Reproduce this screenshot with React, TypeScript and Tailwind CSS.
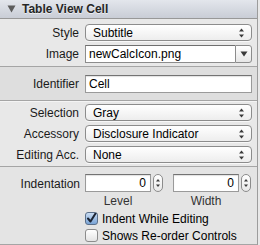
import React from "react";

const font = "font-['Liberation_Sans',Arial,sans-serif]";

function UpDown() {
  return (
    <svg width="7" height="10" viewBox="0 0 7 10" className="shrink-0">
      <path d="M3.5 0.5 L6 3.5 L1 3.5 Z" fill="#3a3a3a" />
      <path d="M3.5 9.5 L6 6.5 L1 6.5 Z" fill="#3a3a3a" />
    </svg>
  );
}

function Row({ label, children }: { label: string; children: React.ReactNode }) {
  return (
    <div className="flex h-[21px] items-center">
      <div className="w-[80px] pr-[1px] text-right text-[12px] text-[#1a1a1a]">{label}</div>
      <div className="ml-[5px] w-[167px]">{children}</div>
    </div>
  );
}

function Popup({ value }: { value: string }) {
  return (
    <div className="flex h-[17px] items-center justify-between rounded-[4px] border border-[#8c8c8c] bg-gradient-to-b from-white to-[#ededed] pl-[7px] pr-[6px] text-[12px] text-black shadow-[0_1px_0_rgba(255,255,255,0.7)]">
      <span>{value}</span>
      <UpDown />
    </div>
  );
}

function Combo({ value }: { value: string }) {
  return (
    <div className="flex h-[18px] items-stretch">
      <div className="flex flex-1 items-center border border-r-0 border-[#8c8c8c] border-t-[#6f6f6f] bg-white pl-[3px] text-[12px] text-black">
        {value}
      </div>
      <div className="flex w-[17px] items-center justify-center rounded-r-[3px] border border-[#8c8c8c] bg-gradient-to-b from-white to-[#e6e6e6]">
        <svg width="8" height="6" viewBox="0 0 8 6">
          <path d="M0.5 0.5 L7.5 0.5 L4 5.5 Z" fill="#3a3a3a" />
        </svg>
      </div>
    </div>
  );
}

function Field({ value, align = "left", className = "" }: { value: string; align?: "left" | "right"; className?: string }) {
  return (
    <div
      className={`flex h-[18px] items-center border border-[#9a9a9a] border-t-[#737373] bg-white text-[12px] text-black shadow-[inset_0_1px_1px_rgba(0,0,0,0.12)] ${
        align === "right" ? "justify-end pr-[4px]" : "pl-[3px]"
      } ${className}`}
    >
      {value}
    </div>
  );
}

function Stepper() {
  return (
    <div className="flex h-[18px] w-[10px] flex-col items-center justify-center rounded-[5px] border border-[#8c8c8c] bg-gradient-to-b from-white to-[#e8e8e8]">
      <svg width="6" height="10" viewBox="0 0 6 10">
        <path d="M3 1 L5 3.5 L1 3.5 Z" fill="#3a3a3a" />
        <path d="M3 9 L5 6.5 L1 6.5 Z" fill="#3a3a3a" />
      </svg>
    </div>
  );
}

function Check({ checked, label }: { checked?: boolean; label: string }) {
  return (
    <div className="flex h-[17px] items-center pl-[85px] text-[12px] text-black">
      {checked ? (
        <div className="flex h-[13px] w-[13px] items-center justify-center rounded-[3px] border border-[#5a6f8a] bg-gradient-to-b from-[#c9dcf2] to-[#7aa4d6]">
          <svg width="11" height="11" viewBox="0 0 11 11">
            <path d="M2 5.5 L4.5 8.5 L9.5 0.5" fill="none" stroke="#1c2433" strokeWidth="2" strokeLinecap="round" strokeLinejoin="round" />
          </svg>
        </div>
      ) : (
        <div className="h-[13px] w-[13px] rounded-[3px] border border-[#8c8c8c] bg-gradient-to-b from-white to-[#e4e4e4]" />
      )}
      <span className="ml-[4px]">{label}</span>
    </div>
  );
}

function Sep() {
  return <div className="h-px shrink-0 bg-[#a5a5a5] shadow-[0_1px_0_rgba(255,255,255,0.5)]" />;
}

export default function App() {
  return (
    <div className={`flex h-[245px] w-[260px] overflow-hidden bg-[#e8e8e8] ${font}`}>
      <div className="flex w-[258px] flex-col border-r border-[#9c9c9c]">
        {/* Header */}
        <div className="flex h-[19px] shrink-0 items-center border-b border-[#989898] bg-gradient-to-b from-[#e3e6ec] to-[#c9cdd6] pl-[7px]">
          <svg width="9" height="8" viewBox="0 0 9 8">
            <path d="M0.5 0.5 L8.5 0.5 L4.5 7.5 Z" fill="#5c5c5c" />
          </svg>
          <span className="ml-[6px] text-[12px] font-bold text-[#262626] [text-shadow:0_1px_0_rgba(255,255,255,0.6)]">
            Table View Cell
          </span>
        </div>

        <div className="pb-[2px] pt-[3px]">
          <Row label="Style">
            <Popup value="Subtitle" />
          </Row>
          <Row label="Image">
            <Combo value="newCalcIcon.png" />
          </Row>
        </div>
        <Sep />

        <div className="bg-[#dedede] py-[6px]">
          <Row label="Identifier">
            <Field value="Cell" />
          </Row>
        </div>
        <Sep />

        <div className="py-[1px]">
          <Row label="Selection">
            <Popup value="Gray" />
          </Row>
          <Row label="Accessory">
            <Popup value="Disclosure Indicator" />
          </Row>
          <Row label="Editing Acc.">
            <Popup value="None" />
          </Row>
        </div>
        <Sep />

        <div className="flex-1 bg-[#e4e4e4] pt-[7px]">
          <div className="flex items-start">
            <div className="w-[80px] pt-[1px] text-right text-[12px] text-[#1a1a1a]">Indentation</div>
            <div className="ml-[5px] flex gap-[10px]">
              <div className="flex w-[78px] flex-col">
                <div className="flex gap-[2px]">
                  <Field value="0" align="right" className="flex-1" />
                  <Stepper />
                </div>
                <div className="pr-[12px] text-center text-[12px] text-[#333]">Level</div>
              </div>
              <div className="flex w-[78px] flex-col">
                <div className="flex gap-[2px]">
                  <Field value="0" align="right" className="flex-1" />
                  <Stepper />
                </div>
                <div className="pr-[12px] text-center text-[12px] text-[#333]">Width</div>
              </div>
            </div>
          </div>
          <Check checked label="Indent While Editing" />
          <Check label="Shows Re-order Controls" />
        </div>
        <Sep />
        <div className="h-[2px] shrink-0" />
      </div>
    </div>
  );
}
